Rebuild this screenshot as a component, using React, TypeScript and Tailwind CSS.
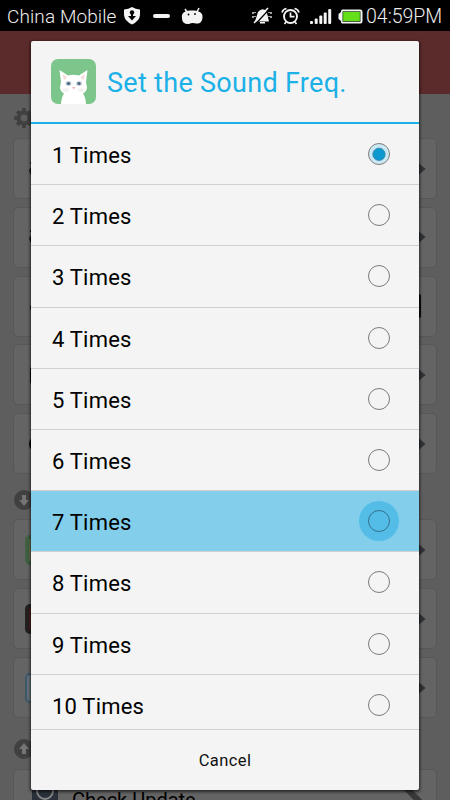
import React, { useState } from 'react';

const options = Array.from({ length: 10 }, (_, i) => `${i + 1} Times`);

function StatusBar() {
  return (
    <div className="h-[31px] shrink-0 bg-black flex items-center justify-between pl-[7px] pr-[8px] text-[#eeeeee]">
      <div className="flex items-center">
        <span className="text-[19px] leading-[31px] w-[110px] whitespace-nowrap font-light tracking-[0.100px] pt-[2px]">China Mobile</span>
        <svg className="ml-[6px]" width="18" height="20" viewBox="0 0 18 20">
          <path d="M9 1Q5.500 3 1 3.500V9Q1.500 15 9 18.500Q16.500 15 17 9V3.500Q12.500 3 9 1Z" fill="#f4f4f4" />
          <circle cx="9" cy="6.500" r="2.200" fill="#000" />
          <path d="M8 7h2v3h3l-4 4.500-4-4.500h3z" fill="#000" />
        </svg>
        <div className="ml-[12px] w-[17px] h-[4px] rounded-full bg-[#f4f4f4]" />
        <svg className="ml-[11px]" width="22" height="18" viewBox="0 0 22 18">
          <path d="M4 2L6 5M18 1L16 5" stroke="#f4f4f4" strokeWidth="1.500" />
          <path d="M1 11C0 5 5 3.500 11 3.500S22 5 21.500 10C21.500 15 18.500 17 15 16.500Q11 15.500 8 17Q1 17.500 1 11Z" fill="#f4f4f4" />
          <circle cx="7.500" cy="7.500" r="0.900" fill="#000" />
          <circle cx="14" cy="7" r="0.900" fill="#000" />
        </svg>
      </div>
      <div className="flex items-center">
        <svg width="20" height="18" viewBox="0 0 20 18">
          <path d="M3 14.500L6 5Q10 0 14.500 4L17 14.500ZM8 15h5v1.500H8z" fill="#f4f4f4" />
          <path d="M1 5v2M1 9v2M3 5v1M3 9v1M19 5v2M19 9v2M17 5v1M17 9v1" stroke="#f4f4f4" strokeWidth="1.300" />
          <path d="M3.500 17L17 2.500" stroke="#000" strokeWidth="1.300" />
          <path d="M2 16L16 1" stroke="#f4f4f4" strokeWidth="1.600" />
        </svg>
        <svg className="ml-[9px]" width="19" height="18" viewBox="0 0 19 18" fill="none" stroke="#f4f4f4">
          <circle cx="9.500" cy="9.500" r="6.500" strokeWidth="1.900" />
          <path d="M9.500 5.500V9.700H13.500M1 5.500Q2 2 5.500 1.500M18 5.500Q17 2 13.500 1.500M5 15L3.500 17M14 15l1.500 2" strokeWidth="1.700" />
        </svg>
        <svg className="ml-[10px] mt-[2px]" width="22" height="17" viewBox="0 0 22 17" fill="#f4f4f4">
          <rect x="0" y="13" width="3" height="3" rx="1" />
          <rect x="4.700" y="10.500" width="3" height="5.500" rx="1" />
          <rect x="9.300" y="7.500" width="3" height="8.500" rx="1" />
          <rect x="13.700" y="4.500" width="3" height="11.500" rx="1" />
          <rect x="18.200" y="1" width="3" height="15" rx="1" />
        </svg>
        <svg className="ml-[6px] mt-[2px]" width="25" height="15" viewBox="0 0 25 15">
          <path d="M4 0.500H22.500Q24.500 0.500 24.500 3V12Q24.500 14.500 22.500 14.500H4Q3 14.500 3 12L0.500 10V5L3 3Q3 0.500 4 0.500Z" fill="#f4f4f4" />
          <rect x="4.500" y="2.300" width="18" height="10.500" fill="#17380a" />
          <rect x="5.200" y="3" width="16.600" height="9" fill="#65df19" />
        </svg>
        <span className="ml-[3px] w-[76px] text-[19.500px] leading-[31px] pt-[2px] whitespace-nowrap font-light">04:59PM</span>
      </div>
    </div>
  );
}

function Card({ right = 'arrow', children }: { right?: string; children?: React.ReactNode }) {
  return (
    <div className="h-[61px] shrink-0 rounded-[5px] border border-[#575757] bg-[#646464] flex items-center justify-between pl-[11px] pr-[10px]">
      <div className="flex items-center gap-[14px]">{children}</div>
      {right === 'arrow' && (
        <svg width="12" height="16" viewBox="0 0 12 16"><path d="M0 -2L11.500 8L0 18Z" fill="#303336" /></svg>
      )}
      {right === 'check' && <div className="mr-[5px] w-[24px] h-[24px] bg-[#080d11] rounded-[2px]" />}
      {right === 'wrench' && (
        <svg width="24" height="26" viewBox="0 0 24 26"><path d="M3 0L24 21" stroke="#383838" strokeWidth="6" /></svg>
      )}
    </div>
  );
}

function Glyph({ d }: { d: string }) {
  return <svg width="24" height="28" viewBox="0 0 24 28"><path d={d} fill="#080808" /></svg>;
}

function Arrow({ up = false }: { up?: boolean }) {
  return (
    <svg className="ml-[1px]" width="20" height="20" viewBox="0 0 20 20">
      <circle cx="10" cy="10" r="10" fill="#404040" />
      <path d={up ? 'M10 4L15 10H12V15H8V10H5Z' : 'M10 16L5 10H8V5H12V10H15Z'} fill="#747474" />
    </svg>
  );
}

function SettingsPage() {
  const bell = 'M7 6a3 3 0 0 0-2 3h13V6zM7 12a4 4 0 0 0-2 6q1 4 4 4h9V12z';

  return (
    <div className="flex-1 min-h-0 flex flex-col bg-[#5e5e5e] px-[13px]">
      <div className="h-[44px] shrink-0 pt-[14px]">
        <svg className="ml-[1px]" width="20" height="20" viewBox="0 0 22 22">
          <circle cx="11" cy="11" r="6" fill="none" stroke="#404040" strokeWidth="4.500" />
          <path d="M11 0v5M11 17v5M0 11h5M17 11h5M3.500 3.500l3 3M15.500 15.500l3 3M18.500 3.500l-3 3M3.500 18.500l3-3" stroke="#404040" strokeWidth="4" />
        </svg>
      </div>
      <div className="flex flex-col gap-[7.800px]">
        <Card><Glyph d={bell} /></Card>
        <Card><Glyph d={bell} /></Card>
        <Card right="check"><Glyph d="M10 11a5 5 0 0 0-5 4q0 6 7 6h6V11z" /></Card>
        <Card><Glyph d="M7 6h13v17H7q-2 0-2-2V8q0-2 2-2z" /></Card>
        <Card><Glyph d="M12 6a8 8 0 1 1 0 16a8 8 0 1 1 0-16z" /></Card>
      </div>
      <div className="h-[45.300px] shrink-0 pt-[15.500px]"><Arrow /></div>
      <div className="flex flex-col gap-[7.800px]">
        <Card><div className="w-[30px] h-[30px] rounded-[5px] bg-[#66704f] border-4 border-[#415f42]" /></Card>
        <Card><div className="w-[30px] h-[30px] rounded-[5px] bg-[#4a2020] border-4 border-[#252020]" /></Card>
        <Card><div className="w-[30px] h-[30px] rounded-[5px] bg-[#65717b] border-2 border-[#3b5869]" /></Card>
      </div>
      <div className="h-[51px] shrink-0 pt-[21px]"><Arrow up /></div>
      <Card right="wrench">
        <svg className="ml-[7px]" width="26" height="28" viewBox="0 0 26 28">
          <rect width="26" height="28" fill="#293039" />
          <circle cx="13" cy="5" r="8" fill="none" stroke="#858585" strokeWidth="2" />
        </svg>
        <span className="text-[20px] leading-[30px] text-black whitespace-nowrap">Check Update</span>
      </Card>
    </div>
  );
}

function CatIcon() {
  return (
    <svg width="45" height="45" viewBox="0 0 45 45">
      <rect width="45" height="45" rx="7" fill="#7dc68b" />
      <path d="M10 45Q10.500 38 13 34.500Q9 32 9 28Q9.500 26 10 23L8.500 11L17 16.500Q22 15 28 16.500L36.500 11L35 23Q35.500 26 36 28Q36 32 32 34.500Q34.500 38 35 45Z" fill="#fff" />
      <path d="M11.500 15L16 18.500L13 21ZM34 15L29.500 18.500L32.500 21Z" fill="#f7d9d5" />
      <ellipse cx="17.500" cy="24.500" rx="2.800" ry="2.200" fill="#b6c0c9" />
      <ellipse cx="28" cy="24.500" rx="2.800" ry="2.200" fill="#b6c0c9" />
      <circle cx="17.500" cy="24.500" r="1.500" fill="#4b6681" />
      <circle cx="28" cy="24.500" r="1.500" fill="#4b6681" />
      <path d="M21 28h3.500l-1.700 2.500z" fill="#f3b9b5" />
      <ellipse cx="15" cy="31" rx="3" ry="2" fill="#f5f2f2" />
      <ellipse cx="30" cy="31" rx="3" ry="2" fill="#f5f2f2" />
    </svg>
  );
}

function Radio({ checked, pressed }: { checked: boolean; pressed: boolean }) {
  return (
    <svg width="40" height="40" viewBox="0 0 40 40">
      {pressed && <circle cx="20" cy="20" r="20" fill="#53bde8" />}
      {checked && <circle cx="20" cy="20" r="10" fill="#c8e8f5" />}
      <circle cx="20" cy="20" r="10.500" fill="none" stroke={pressed ? '#33738d' : '#7b7b7b'} strokeWidth="1" />
      {checked && <circle cx="20" cy="20.300" r="6.200" fill="#0d99cf" stroke="#397f9c" strokeWidth="0.700" />}
    </svg>
  );
}

export default function App() {
  const [selected, setSelected] = useState(0);
  const pressed = 6;

  return (
    <div className="relative w-[450px] h-[800px] overflow-hidden flex flex-col font-['Roboto',sans-serif]">
      <StatusBar />
      <div className="h-[63px] shrink-0 bg-[#5b2b2b]" />
      <SettingsPage />

      {/* Dialog */}
      <div className="absolute left-[31px] top-[41px] w-[388px] h-[749px] rounded-[2px] bg-[#f4f4f4] shadow-[0_1px_3px_1px_rgba(0,0,0,0.6)] flex flex-col overflow-hidden">
        <div className="h-[83px] shrink-0 border-b-2 border-[#1bb1e7] flex items-center pl-[20px] pb-[1px]">
          <CatIcon />
          <h1 className="ml-[11px] text-[27px] leading-[34px] tracking-[0.300px] text-[#1bb1e7] whitespace-nowrap pt-[4px]">Set the Sound Freq.</h1>
        </div>
        <div className="h-[605px] shrink-0 overflow-hidden">
          {options.map((label, i) => (
            <button
              key={label}
              onClick={() => setSelected(i)}
              className={`w-full h-[61.2px] flex items-center justify-between pl-[21px] pr-[20.5px] border-b border-[#d0d0d0] text-[22px] text-black tracking-[0.200px] ${i === pressed ? 'bg-[#82ceeb]' : ''}`}
            >
              <span className="pt-[3px]">{label}</span>
              <Radio checked={i === selected} pressed={i === pressed} />
            </button>
          ))}
        </div>
        <button className="flex-1 border-t border-[#d0d0d0] text-[16.500px] text-[#111111] pt-[3px] tracking-[0.400px]">Cancel</button>
      </div>
    </div>
  );
}
